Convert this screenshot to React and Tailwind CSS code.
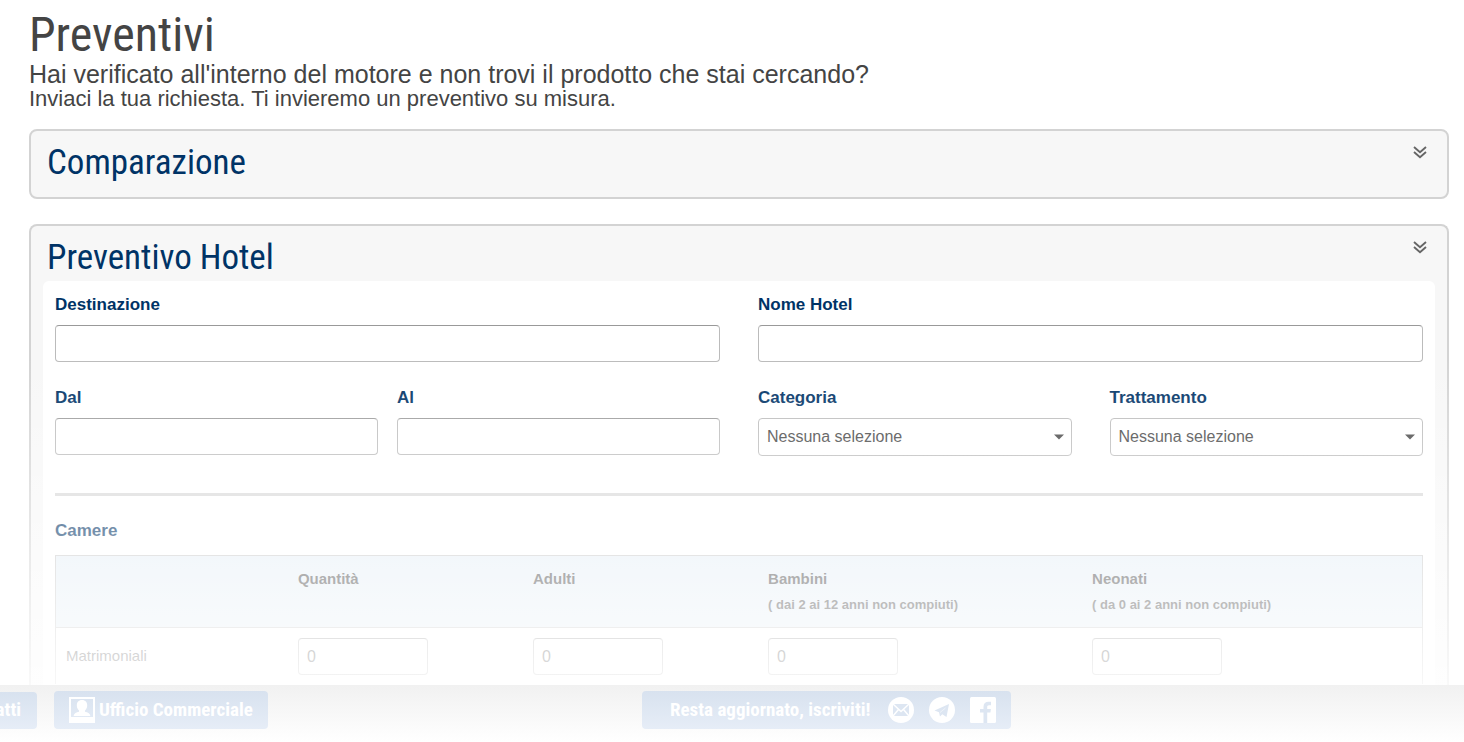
import React, { useState } from "react";

const roomColumns = [
  { name: "quantita", label: "Quantità", note: "" },
  { name: "adulti", label: "Adulti", note: "" },
  { name: "bambini", label: "Bambini", note: "( dai 2 ai 12 anni non compiuti)" },
  { name: "neonati", label: "Neonati", note: "( da 0 ai 2 anni non compiuti)" },
];

const condensed = "font-['Roboto_Condensed','Liberation_Sans_Narrow',sans-serif]";

const ChevronsDown = () => (
  <svg width="14" height="13" viewBox="0 0 14 13" fill="none" stroke="#666" strokeWidth="1.9">
    <path d="M1 1 7 6.200 13 1M1 6 7 11.200 13 6" />
  </svg>
);

const Field = ({ id, label, value, onChange }) => (
  <div className="min-w-0">
    <label htmlFor={id} className="block text-[17px] leading-6 font-bold text-[#003366]">
      {label}
    </label>
    <input
      id={id}
      name={id}
      type="text"
      value={value}
      onChange={onChange}
      className="mt-2 block h-[37px] w-full rounded border border-[#bbb] border-t-[#999] bg-white px-2 text-base text-[#444]"
    />
  </div>
);

const SelectField = ({ id, label, value, onChange }) => (
  <div className="min-w-0">
    <label htmlFor={id} className="block text-[17px] leading-6 font-bold text-[#003366]">
      {label}
    </label>
    <div className="relative mt-2">
      <select
        id={id}
        name={id}
        value={value}
        onChange={onChange}
        className="block h-[38px] w-full appearance-none rounded border border-[#bbb] bg-white px-2 text-base text-[#444]"
      >
        <option value="">Nessuna selezione</option>
      </select>
      <svg
        className="pointer-events-none absolute top-4 right-2"
        width="10"
        height="6"
        viewBox="0 0 10 6"
        fill="#444"
      >
        <path d="M0 .5h10L5 5.500z" />
      </svg>
    </div>
  </div>
);

const PanelHeader = ({ title }) => (
  <div className="flex items-start justify-between pr-2 pl-1">
    <h2 className={`pt-2 text-[35px] leading-[47px] text-[#003366] ${condensed}`}>{title}</h2>
    <button type="button" aria-label={title} className="pt-[15px]">
      <ChevronsDown />
    </button>
  </div>
);

const App = () => {
  const [form, setForm] = useState({
    destinazione: "",
    nomeHotel: "",
    dal: "",
    al: "",
    categoria: "",
    trattamento: "",
    quantita: "0",
    adulti: "0",
    bambini: "0",
    neonati: "0",
  });

  // Handle input changes
  const handleChange = (e) => {
    const { name, value } = e.target;
    setForm((prev) => ({ ...prev, [name]: value }));
  };

  return (
    <div className="flex min-h-screen flex-col overflow-hidden bg-white font-['Liberation_Sans',Arial,sans-serif] text-[#444]">
      <main className="relative flex flex-1 flex-col pr-[15px] pl-[29px]">
        <h1 className={`pt-2 text-[48px] leading-[53px] ${condensed}`}>Preventivi</h1>
        <p className="text-[25px] leading-[26px]">
          Hai verificato all'interno del motore e non trovi il prodotto che stai cercando?
        </p>
        <p className="text-[22px] leading-6">
          Inviaci la tua richiesta. Ti invieremo un preventivo su misura.
        </p>

        <section className="mt-[18px] rounded-lg border-2 border-[#d3d3d3] bg-[#f7f7f7] px-3 pb-[11px]">
          <PanelHeader title="Comparazione" />
        </section>

        <section className="mt-[25px] flex flex-1 flex-col rounded-t-lg border-2 border-b-0 border-[#d3d3d3] bg-[#f7f7f7] px-3">
          <PanelHeader title="Preventivo Hotel" />

          <form className="flex-1 rounded-t-md bg-white px-3 pt-3">
            <div className="grid grid-cols-2 gap-x-[38px] gap-y-6">
              <Field id="destinazione" label="Destinazione" value={form.destinazione} onChange={handleChange} />
              <Field id="nomeHotel" label="Nome Hotel" value={form.nomeHotel} onChange={handleChange} />
              <div className="grid grid-cols-2 gap-[19px]">
                <Field id="dal" label="Dal" value={form.dal} onChange={handleChange} />
                <Field id="al" label="Al" value={form.al} onChange={handleChange} />
              </div>
              <div className="grid grid-cols-2 gap-[38px]">
                <SelectField id="categoria" label="Categoria" value={form.categoria} onChange={handleChange} />
                <SelectField id="trattamento" label="Trattamento" value={form.trattamento} onChange={handleChange} />
              </div>
            </div>

            <hr className="mt-[37px] border-t-[3px] border-[#d8d8d8]" />

            <h3 className="mt-[23px] text-[17px] leading-6 font-bold text-[#003366]">Camere</h3>

            {/* Rooms */}
            <table className="mt-3 w-full table-fixed border-collapse border border-b-0 border-[#c8c8c8] text-left">
              <colgroup>
                <col className="w-[17%]" />
                <col className="w-[17.2%]" />
                <col className="w-[17.2%]" />
                <col className="w-[23.7%]" />
                <col className="w-[24.9%]" />
              </colgroup>
              <thead>
                <tr className="h-[72px] border-b border-[#c8c8c8] bg-[#e6eff6] align-top">
                  <th></th>
                  {roomColumns.map((col) => (
                    <th key={col.name} className="px-[10px] pt-[10px] text-[15px] leading-[26px] font-bold">
                      {col.label}
                      {col.note && <span className="block text-[13px]">{col.note}</span>}
                    </th>
                  ))}
                </tr>
              </thead>
              <tbody>
                <tr>
                  <td className="px-[10px] text-[15px]">Matrimoniali</td>
                  {roomColumns.map((col) => (
                    <td key={col.name} className="px-[10px] pt-[10px] pb-[9px]">
                      <input
                        type="text"
                        name={col.name}
                        aria-label={`Matrimoniali ${col.label}`}
                        value={form[col.name]}
                        onChange={handleChange}
                        className="block h-[37px] w-[130px] rounded border border-[#b5b5b5] border-t-[#999] bg-white px-2 text-base"
                      />
                    </td>
                  ))}
                </tr>
              </tbody>
            </table>
          </form>
        </section>

        {/* Fade out towards the bottom bar */}
        <div className="pointer-events-none absolute inset-0 bg-linear-to-b from-white/0 from-52% to-white/86" />
      </main>

      <footer
        className={`grid h-[57px] grid-cols-[642fr_822fr] items-start bg-linear-to-b from-[#f1f1f1] to-white pt-[6px] text-[19px] font-bold text-white ${condensed}`}
      >
        <div className="-ml-20 flex items-center gap-[17px]">
          <a
            href="#contatti"
            className="flex h-[37px] w-[117px] items-center justify-end rounded bg-linear-to-b from-[#d8e2ef] to-[#e6edf7] pr-4"
          >
            Contatti
          </a>
          <a
            href="#ufficio"
            className="flex h-[38px] items-center gap-1 rounded bg-linear-to-b from-[#d8e2ef] to-[#e6edf7] px-[15px]"
          >
            <svg width="26" height="26" viewBox="0 0 26 26" fill="#fff">
              <path fillRule="evenodd" d="M0 0h26v26H0zM2 2v18h22V2z" />
              <path d="M13 3c3.500 0 5.200 2.300 5.200 5.300 0 2.300-.9 4.200-2.200 5.300v1.200c2.600.5 5 1.600 5.400 4.200H4.600c.4-2.600 2.800-3.700 5.400-4.200v-1.200c-1.300-1.100-2.200-3-2.200-5.300C7.800 5.300 9.500 3 13 3z" />
            </svg>
            Ufficio Commerciale
          </a>
        </div>
        <div className="flex h-[38px] w-[369px] items-center justify-between rounded bg-linear-to-b from-[#d8e2ef] to-[#e6edf7] pr-[15px] pl-7">
          <span>Resta aggiornato, iscriviti!</span>
          <div className="flex items-center gap-[15px]">
            <a href="#newsletter" aria-label="Newsletter">
              <svg width="26" height="26" viewBox="0 0 26 26">
                <circle cx="13" cy="13" r="13" fill="#fff" />
                <rect x="5" y="7" width="16" height="12" rx="1" fill="#dde6f2" />
                <path d="M5 7l8 7.500L21 7M5 19l5.500-6.500M21 19l-5.500-6.500" fill="none" stroke="#fff" strokeWidth="1.500" />
              </svg>
            </a>
            <a href="#telegram" aria-label="Telegram">
              <svg width="26" height="26" viewBox="0 0 26 26">
                <circle cx="13" cy="13" r="13" fill="#fff" />
                <path d="M5.500 13.500 20 7 17.500 20l-4.200-2.700-2.300 2.200-1-4.200z" fill="#dde6f2" />
                <path d="M11 15.500l5.500-4.500" stroke="#fff" strokeWidth=".5" />
              </svg>
            </a>
            <a href="#facebook" aria-label="Facebook">
              <svg width="26" height="26" viewBox="0 0 26 26">
                <rect width="26" height="26" rx="1.500" fill="#fff" />
                <path d="M13.500 26V15.500H10V12h3.500V9.800c0-3.300 2-5 5-5H21v3.500h-2c-1.300 0-1.800.7-1.800 1.800V12h3.700l-.5 3.500h-3.200V26z" fill="#dde6f2" />
              </svg>
            </a>
          </div>
        </div>
      </footer>
    </div>
  );
};

export default App;
